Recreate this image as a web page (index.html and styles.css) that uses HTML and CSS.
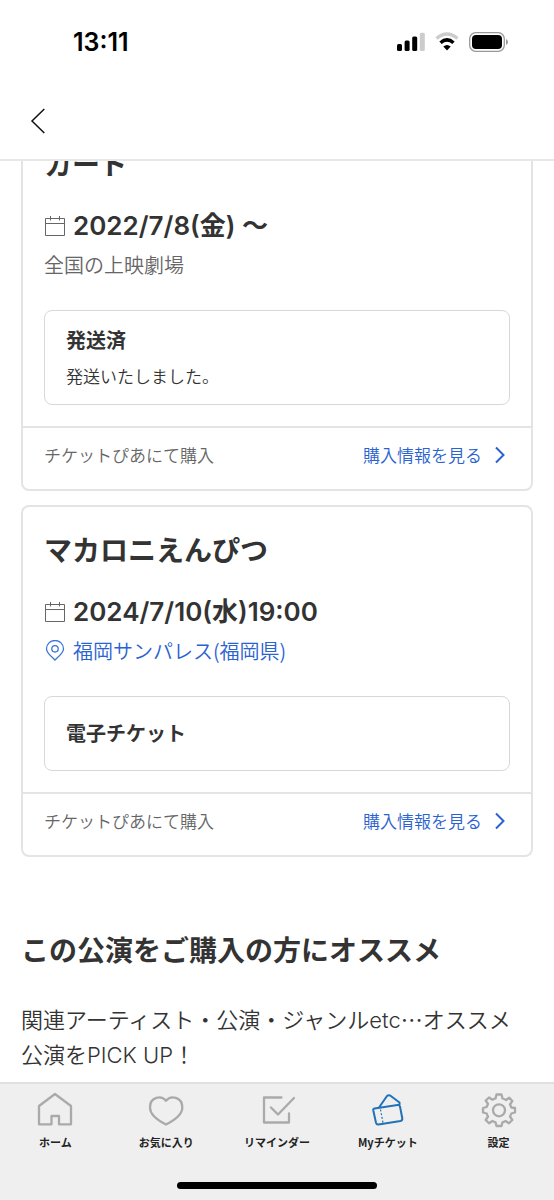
FILE: index.html
```html
<!DOCTYPE html>
<html lang="ja">
<head>
<meta charset="utf-8">
<meta name="viewport" content="width=device-width, initial-scale=1">
<title>Myチケット</title>
<link rel="stylesheet" href="styles.css">
</head>
<body>
<header class="header">
  <div class="status">
    <span class="clock">13:11</span>
    <div class="status-icons">
      <svg width="28" height="20" viewBox="0 0 28 20" aria-hidden="true">
        <rect x="0" y="12" width="5" height="7" rx="1.5"/>
        <rect x="7.6" y="8.500" width="5" height="10.500" rx="1.5"/>
        <rect x="15.200" y="4.500" width="5" height="14.500" rx="1.5"/>
        <rect x="22.800" y="0.800" width="5" height="18.200" rx="1.500" fill="#ccc"/>
      </svg>
      <svg width="24" height="20" viewBox="0 0 24 20" fill="none" aria-hidden="true">
        <path d="M1.500 6.500Q12-2.500 22.500 6.500" stroke="#ccc" stroke-width="3.400"/>
        <path d="M5.500 10.800Q12 4.900 18.500 10.800" stroke="#000" stroke-width="3.400"/>
        <path d="M8.300 14.600Q12 11.400 15.700 14.600L12 18.600Z" fill="#000"/>
      </svg>
      <svg width="40" height="20" viewBox="0 0 40 20" aria-hidden="true">
        <rect x="0.700" y="0.700" width="34.600" height="18.600" rx="6" fill="none" stroke="#999" stroke-width="1.300"/>
        <rect x="3" y="3" width="30" height="14" rx="4"/>
        <path d="M37 7Q39 8 39 10T37 13Z" fill="#999"/>
      </svg>
    </div>
  </div>
  <button class="back" type="button" aria-label="戻る">
    <svg width="16" height="26" viewBox="0 0 16 26" fill="none" stroke="#111" stroke-width="1.500" aria-hidden="true"><path d="M14.300 1L2 13L14.300 25"/></svg>
  </button>
</header>

<main class="content">
  <article class="card">
    <div class="card-body">
      <h2 class="card-title">カード</h2>
      <p class="date">
        <svg class="row-icon" viewBox="0 0 22 22" fill="none" stroke="#666" aria-hidden="true"><path d="M1.500 3.500H20.500V20.500H1.500ZM1.500 8.500H20.500M6.500 1V5.500M15.500 1V5.500"/></svg>
        <span>2022/7/8(金) 〜</span>
      </p>
      <p class="place">全国の上映劇場</p>
      <section class="ticket">
        <h3 class="ticket-title">発送済</h3>
        <p class="ticket-note">発送いたしました。</p>
      </section>
    </div>
    <footer class="card-footer">
      <span>チケットぴあにて購入</span>
      <a class="detail" href="#purchase-1">購入情報を見る
        <svg width="12" height="18" viewBox="0 0 12 18" fill="none" stroke="#2a62d0" stroke-width="2" aria-hidden="true"><path d="M2 1.500L9.500 9L2 16.500"/></svg>
      </a>
    </footer>
  </article>

  <article class="card">
    <div class="card-body">
      <h2 class="card-title">マカロニえんぴつ</h2>
      <p class="date">
        <svg class="row-icon" viewBox="0 0 22 22" fill="none" stroke="#666" aria-hidden="true"><path d="M1.500 3.500H20.500V20.500H1.500ZM1.500 8.500H20.500M6.500 1V5.500M15.500 1V5.500"/></svg>
        <span>2024/7/10(水)19:00</span>
      </p>
      <p class="place">
        <a class="place-link" href="#venue">
          <svg class="row-icon" viewBox="0 0 22 22" fill="none" stroke="#3b76d6" stroke-width="1.300" aria-hidden="true"><path d="M11 20C7 16 2.500 13 2.500 8.700A8.500 8.200 0 0 1 19.500 8.700C19.500 13 15 16 11 20Z"/><circle cx="11" cy="8.800" r="3.200"/></svg>
          <span>福岡サンパレス(福岡県)</span>
        </a>
      </p>
      <section class="ticket ticket-single">
        <h3 class="ticket-title">電子チケット</h3>
      </section>
    </div>
    <footer class="card-footer">
      <span>チケットぴあにて購入</span>
      <a class="detail" href="#purchase-2">購入情報を見る
        <svg width="12" height="18" viewBox="0 0 12 18" fill="none" stroke="#2a62d0" stroke-width="2" aria-hidden="true"><path d="M2 1.500L9.500 9L2 16.500"/></svg>
      </a>
    </footer>
  </article>

  <section class="recommend">
    <h2 class="recommend-title">この公演をご購入の方にオススメ</h2>
    <p class="recommend-text">関連アーティスト・公演・ジャンル<span class="latin">etc</span>…オススメ公演を<span class="latin">PICK UP</span>！</p>
  </section>
</main>

<nav class="tabs">
  <div class="tab-list">
    <a class="tab" href="#home">
      <svg class="tab-icon" viewBox="0 0 36 36" aria-hidden="true"><path d="M18 2L34 14V32.300H22V24H14.500V32.300H2V14Z"/></svg>
      <span>ホーム</span>
    </a>
    <a class="tab" href="#favorites">
      <svg class="tab-icon" viewBox="0 0 36 36" aria-hidden="true"><path d="M18 8.700C22.500 3 34.300 4.500 34.300 15.500C34.300 23.500 26 28.500 18 32.500C10 28.500 2 23.500 2 15.500C2 4.500 13.500 3 18 8.700Z"/></svg>
      <span>お気に入り</span>
    </a>
    <a class="tab" href="#reminder">
      <svg class="tab-icon" viewBox="0 0 36 36" aria-hidden="true"><path d="M22.500 5.500H5V30.500H30V21.500M12 15.500L19 22.500L35 6"/></svg>
      <span>リマインダー</span>
    </a>
    <a class="tab tab-active" href="#tickets" aria-current="page">
      <svg class="tab-icon" viewBox="0 0 36 36" aria-hidden="true"><path d="M4.500 16.500L27.500 13Q29.500 12.800 30 14.500L32.300 26.500Q32.500 28.500 30.500 29L8.500 32.500Q6.500 32.700 6 30.700L3.300 18.500Q3 16.800 4.500 16.500ZM9 15.500L17 4Q18.500 2.500 20.500 3.700L29.500 10.500V13"/><path d="M10.500 17.500L13 31" stroke-dasharray="2 1.800" stroke-width="1.200" stroke-linecap="butt"/></svg>
      <span>Myチケット</span>
    </a>
    <a class="tab" href="#settings">
      <svg class="tab-icon" viewBox="0 0 36 36" aria-hidden="true"><path d="M15.500 2.500H20.500L21.500 6.500Q23.500 7 25 8L28.300 5.700L31.300 9L29 12.500Q29.800 14 30.300 15.500L34 16V20.500L30.300 21.500Q29.800 23 29 24.500L31.300 28L28 31.300L24.500 29Q23 29.800 21.500 30.300L20.500 34H15.500L14.500 30.300Q13 29.800 11.500 29L8 31.300L4.700 28L7 24.500Q6.200 23 5.700 21.500L2 20.500V16L5.700 15Q6.200 13.500 7 12L4.700 8.500L8 5.500L11.500 7.700Q13 6.900 14.500 6.500Z"/><circle cx="18" cy="18.300" r="6"/></svg>
      <span>設定</span>
    </a>
  </div>
  <div class="home-indicator"></div>
</nav>
</body>
</html>
```

FILE: styles.css
```css
* { box-sizing: border-box; }

body {
  margin: 0;
  height: 100vh;
  display: flex;
  flex-direction: column;
  background: #fff;
  color: #333;
  font-family: "Noto Sans CJK JP", sans-serif;
}

h2, h3, p { margin: 0; }
a { text-decoration: none; color: inherit; }
svg { display: block; flex: none; }

.header {
  flex: none;
  background: #fff;
  border-bottom: 2px solid #e8e8e8;
  z-index: 1;
}

.status {
  display: flex;
  justify-content: space-between;
  align-items: center;
  height: 83px;
  padding: 0 45px 0 73px;
}

.clock {
  font: 600 25px/32px Inter, sans-serif;
  color: #000;
}

.status-icons {
  display: flex;
  align-items: center;
  gap: 10px;
}

.back {
  display: flex;
  align-items: center;
  height: 76px;
  width: 60px;
  padding: 0 0 0 30px;
  border: 0;
  background: none;
}

.content {
  flex: 1;
  min-height: 0;
  overflow: hidden;
  padding: 0 21px;
}

.card {
  border: 2px solid #e4e4e4;
  border-radius: 8px;
  margin-bottom: 14px;
}

.card:first-child { margin-top: -42px; }

.card-body { padding: 22px 21px 21px; }

.card-title {
  font-size: 28px;
  line-height: 40px;
  font-weight: 700;
}

.date {
  display: flex;
  align-items: center;
  gap: 7px;
  margin-top: 23px;
  font: 600 26px/40px Inter, "Noto Sans CJK JP", sans-serif;
}

.row-icon { width: 22px; height: 22px; }

.place {
  font-size: 20px;
  line-height: 38px;
  font-weight: 350;
  color: #666;
}

.place-link {
  display: flex;
  align-items: center;
  gap: 7px;
  color: #2a62d0;
}

.ticket {
  margin-top: 26px;
  border: 1px solid #d8d8d8;
  border-radius: 8px;
  padding: 15px 21px 16px;
}

.ticket-single { padding: 22px 21px 23px; }

.ticket-title {
  font-size: 20px;
  line-height: 28px;
  font-weight: 700;
}

.ticket-note {
  margin-top: 10px;
  font-size: 17px;
  line-height: 24px;
  font-weight: 350;
}

.card-footer {
  display: flex;
  justify-content: space-between;
  align-items: center;
  border-top: 2px solid #e4e4e4;
  padding: 15px 25px 22px 21px;
  font-size: 17px;
  line-height: 24px;
  font-weight: 350;
  color: #666;
}

.detail {
  display: flex;
  align-items: center;
  gap: 12px;
  color: #2a62d0;
}

.recommend { margin-top: 72px; }

.recommend-title {
  font-size: 28px;
  line-height: 40px;
  font-weight: 700;
}

.recommend-text {
  margin-top: 32px;
  padding-right: 10px;
  font-size: 22px;
  line-height: 35px;
  font-weight: 350;
}

.latin {
  font-family: Inter, sans-serif;
  font-weight: 300;
  line-height: 1;
}

.tabs {
  flex: none;
  background: #efefef;
  border-top: 2px solid #e0e0e0;
  padding: 8px 0 11px;
}

.tab-list {
  display: grid;
  grid-template-columns: repeat(5, 1fr);
}

.tab {
  display: flex;
  flex-direction: column;
  align-items: center;
  gap: 6px;
  font-size: 11px;
  line-height: 16px;
  font-weight: 700;
  color: #222;
}

.tab-icon {
  width: 36px;
  height: 36px;
  fill: none;
  stroke: #aaa;
  stroke-width: 2.3;
  stroke-linejoin: round;
  stroke-linecap: round;
}

.tab-active .tab-icon {
  stroke: #2272b8;
  stroke-width: 2;
}

.home-indicator {
  width: 36%;
  height: 7px;
  margin: 32px auto 0;
  border-radius: 4px;
  background: #000;
}
```
